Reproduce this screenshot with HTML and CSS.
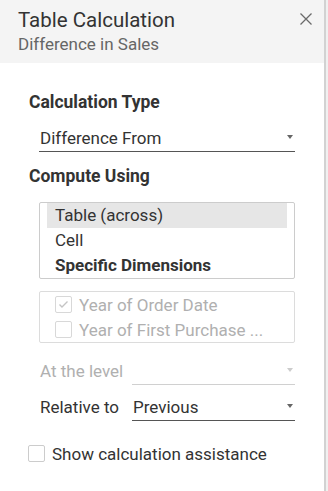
FILE: index.html
```html
<!DOCTYPE html>
<html lang="en">

<head>
    <meta charset="UTF-8">
    <meta name="viewport" content="width=device-width, initial-scale=1.0">
    <title>Table Calculation</title>

    <link rel="stylesheet" href="styles.css">
</head>

<body>
    <div class="panel">
        <div class="header">
            <div>
                <div class="title">Table Calculation</div>
                <div class="subtitle">Difference in Sales</div>
            </div>
            <svg class="close" width="12" height="12" viewBox="0 0 12 12">
                <path d="M0.5 0.5 L11.5 11.5 M11.5 0.5 L0.5 11.5" stroke="#6a6a6a" stroke-width="1.3" fill="none" />
            </svg>
        </div>

        <div class="content">
            <h2>Calculation Type</h2>
            <div class="dropdown wide">
                <span>Difference From</span>
                <span class="arrow"></span>
            </div>

            <h2 class="second">Compute Using</h2>
            <div class="listbox">
                <div class="item selected">Table (across)</div>
                <div class="item">Cell</div>
                <div class="item bold">Specific Dimensions</div>
            </div>

            <div class="checkbox-list">
                <div class="check-row">
                    <span class="box">
                        <svg width="11" height="9" viewBox="0 0 11 9">
                            <path d="M1.5 4.5 L4 7 L9.5 1.5" stroke="#c4c4c4" stroke-width="1.4" fill="none" />
                        </svg>
                    </span>
                    Year of Order Date
                </div>
                <div class="check-row">
                    <span class="box"></span>
                    Year of First Purchase ...
                </div>
            </div>

            <div class="field disabled">
                <label>At the level</label>
                <div class="dropdown">
                    <span></span>
                    <span class="arrow"></span>
                </div>
            </div>

            <div class="field">
                <label>Relative to</label>
                <div class="dropdown">
                    <span>Previous</span>
                    <span class="arrow"></span>
                </div>
            </div>

            <div class="assist">
                <span class="box"></span>
                Show calculation assistance
            </div>
        </div>
    </div>
    <div class="strip"></div>
</body>

</html>
```

FILE: styles.css
```css
:root {
    --text: #333;
    --muted: #666;
    --disabled: #b0b0b0;
    --line: #ccc;
}

body {
    margin: 0;
    font-family: Roboto, "Liberation Sans", sans-serif;
    color: var(--text);
    display: flex;
    height: 491px;
    overflow: hidden;
    background: #fff;
}

.panel {
    width: 324px;
    border-right: 2px solid #d2d2d2;
}

.strip {
    width: 2px;
    background: #f0f0f0;
}

.header {
    background: #f4f4f4;
    height: 63px;
    padding: 8px 12px 0 18px;
    box-sizing: border-box;
    display: flex;
    justify-content: space-between;
    align-items: flex-start;
}

.title {
    font-size: 20.5px;
    line-height: 24px;
    color: #333;
}

.subtitle {
    font-size: 17px;
    line-height: 24px;
    color: var(--muted);
}

.close {
    margin-top: 5px;
}

.content {
    padding: 28px 29px 0 29px;
}

h2 {
    font-size: 17.5px;
    font-weight: bold;
    margin: 0;
    line-height: 22px;
}

h2.second {
    margin-top: 13px;
}

/* dropdowns: texto abajo, flecha un poco más arriba */
.dropdown {
    display: flex;
    justify-content: space-between;
    align-items: flex-end;
    border-bottom: 1px solid #555;
    height: 36px;
    box-sizing: border-box;
    font-size: 17px;
    line-height: 20px;
    padding: 0 2px 3px 1px;
    flex: 1;
}

.dropdown.wide {
    height: 39px;
    margin-left: 10px;
}

.arrow {
    width: 0;
    height: 0;
    border-left: 3.5px solid transparent;
    border-right: 3.5px solid transparent;
    border-top: 4px solid #666;
    margin-bottom: 9px;
}

.listbox {
    margin: 15px 0 0 10px;
    border: 1px solid var(--line);
    border-radius: 2px;
    padding: 0 7px;
}

.item {
    height: 25px;
    line-height: 25px;
    font-size: 17px;
    padding-left: 8px;
}

.item.selected {
    background: #e6e6e6;
}

.item.bold {
    font-weight: bold;
}

.checkbox-list {
    margin: 12px 0 0 10px;
    border: 1px solid #dcdcdc;
    border-radius: 2px;
    padding: 0 0 0 15px;
    color: var(--disabled);
    font-size: 17px;
}

.check-row {
    display: flex;
    align-items: center;
    gap: 7px;
    height: 25px;
}

.box {
    width: 17px;
    height: 17px;
    box-sizing: border-box;
    border: 1px solid #ccc;
    border-radius: 2px;
    display: flex;
    align-items: center;
    justify-content: center;
    flex: none;
    background: #fff;
}

.checkbox-list .box {
    border-color: #d8d8d8;
}

.field {
    display: flex;
    align-items: flex-end;
    margin-left: 10px;
    font-size: 17px;
}

.field label {
    width: 92px;
    flex: none;
    padding: 0 0 4px 1px;
    line-height: 20px;
}

.disabled {
    margin-top: 6px;
    color: var(--disabled);
}

.disabled .dropdown {
    border-bottom-color: #d0d0d0;
}

.disabled .arrow {
    border-top-color: #ccc;
}

.assist {
    display: flex;
    align-items: center;
    gap: 7px;
    height: 25px;
    margin: 20px 0 0 -1px;
    font-size: 17px;
}
```
